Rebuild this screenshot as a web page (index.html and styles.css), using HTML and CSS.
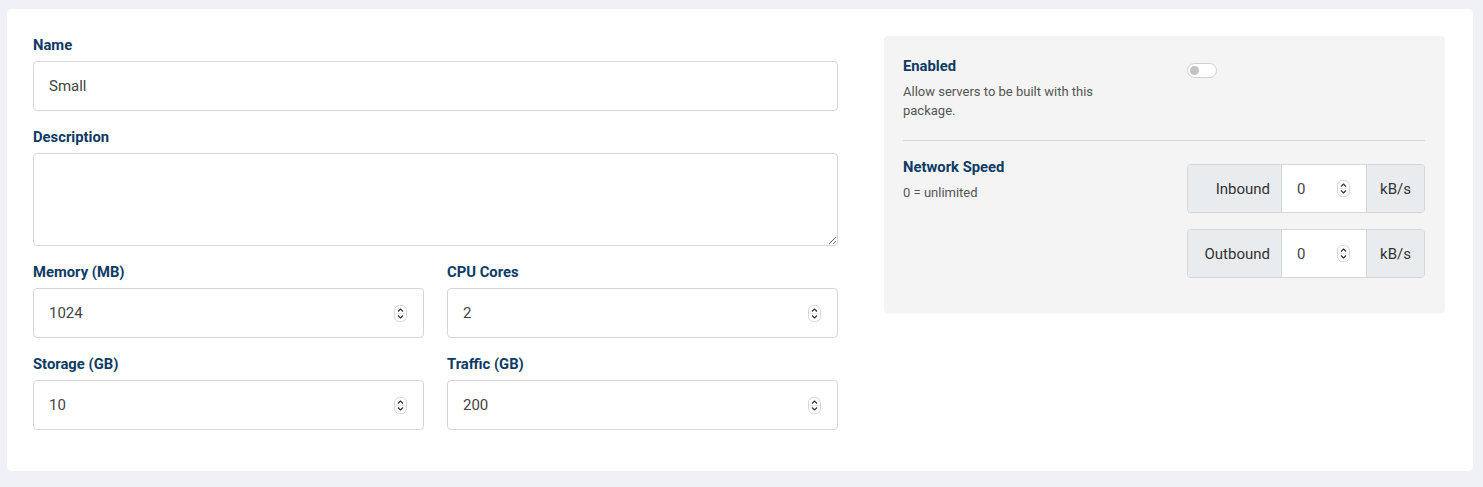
FILE: index.html
```html
<!DOCTYPE html>
<html lang="en">
<head>
    <meta charset="UTF-8">
    <meta name="viewport" content="width=device-width, initial-scale=1.0">
    <title>Package</title>
    <link rel="stylesheet" href="styles.css">
</head>
<body>

    <!-- Package form card -->
    <div class="card">
        <div class="form-grid">

            <!-- Left column: basic fields -->
            <div class="main-col">
                <div class="field">
                    <label class="label">Name</label>
                    <input class="input" type="text" value="Small">
                </div>
                <div class="field">
                    <label class="label">Description</label>
                    <textarea class="input textarea"></textarea>
                </div>
                <div class="pair">
                    <div class="field">
                        <label class="label">Memory (MB)</label>
                        <div class="input num"><span class="num-val">1024</span><svg class="spin" width="13" height="17" viewBox="0 0 13 17"><rect x="0.5" y="0.5" width="12" height="16" rx="5" fill="#fff" stroke="#d6d6d6"/><line x1="2" y1="8.5" x2="11" y2="8.5" stroke="#e8e8e8"/><path d="M4 6.5 L6.5 4 L9 6.5" fill="none" stroke="#333" stroke-width="1.2"/><path d="M4 10.5 L6.5 13 L9 10.5" fill="none" stroke="#333" stroke-width="1.2"/></svg></div>
                    </div>
                    <div class="field">
                        <label class="label">CPU Cores</label>
                        <div class="input num"><span class="num-val">2</span><svg class="spin" width="13" height="17" viewBox="0 0 13 17"><rect x="0.5" y="0.5" width="12" height="16" rx="5" fill="#fff" stroke="#d6d6d6"/><line x1="2" y1="8.5" x2="11" y2="8.5" stroke="#e8e8e8"/><path d="M4 6.5 L6.5 4 L9 6.5" fill="none" stroke="#333" stroke-width="1.2"/><path d="M4 10.5 L6.5 13 L9 10.5" fill="none" stroke="#333" stroke-width="1.2"/></svg></div>
                    </div>
                </div>
                <div class="pair">
                    <div class="field">
                        <label class="label">Storage (GB)</label>
                        <div class="input num"><span class="num-val">10</span><svg class="spin" width="13" height="17" viewBox="0 0 13 17"><rect x="0.5" y="0.5" width="12" height="16" rx="5" fill="#fff" stroke="#d6d6d6"/><line x1="2" y1="8.5" x2="11" y2="8.5" stroke="#e8e8e8"/><path d="M4 6.5 L6.5 4 L9 6.5" fill="none" stroke="#333" stroke-width="1.2"/><path d="M4 10.5 L6.5 13 L9 10.5" fill="none" stroke="#333" stroke-width="1.2"/></svg></div>
                    </div>
                    <div class="field">
                        <label class="label">Traffic (GB)</label>
                        <div class="input num"><span class="num-val">200</span><svg class="spin" width="13" height="17" viewBox="0 0 13 17"><rect x="0.5" y="0.5" width="12" height="16" rx="5" fill="#fff" stroke="#d6d6d6"/><line x1="2" y1="8.5" x2="11" y2="8.5" stroke="#e8e8e8"/><path d="M4 6.5 L6.5 4 L9 6.5" fill="none" stroke="#333" stroke-width="1.2"/><path d="M4 10.5 L6.5 13 L9 10.5" fill="none" stroke="#333" stroke-width="1.2"/></svg></div>
                    </div>
                </div>
            </div>

            <!-- Right column: settings panel -->
            <div class="panel">
                <div class="panel-row">
                    <div>
                        <div class="label">Enabled</div>
                        <p class="help">Allow servers to be built with this package.</p>
                    </div>
                    <div class="toggle-wrap">
                        <span class="toggle"><span class="knob"></span></span>
                    </div>
                </div>

                <hr class="divider">

                <div class="panel-row">
                    <div>
                        <div class="label">Network Speed</div>
                        <p class="help small">0 = unlimited</p>
                    </div>
                    <div class="groups">
                        <div class="group">
                            <span class="addon addon-name">Inbound</span>
                            <span class="group-input"><span>0</span><svg class="spin" width="13" height="17" viewBox="0 0 13 17"><rect x="0.5" y="0.5" width="12" height="16" rx="5" fill="#fff" stroke="#d6d6d6"/><line x1="2" y1="8.5" x2="11" y2="8.5" stroke="#e8e8e8"/><path d="M4 6.5 L6.5 4 L9 6.5" fill="none" stroke="#333" stroke-width="1.2"/><path d="M4 10.5 L6.5 13 L9 10.5" fill="none" stroke="#333" stroke-width="1.2"/></svg></span>
                            <span class="addon addon-unit">kB/s</span>
                        </div>
                        <div class="group">
                            <span class="addon addon-name">Outbound</span>
                            <span class="group-input"><span>0</span><svg class="spin" width="13" height="17" viewBox="0 0 13 17"><rect x="0.5" y="0.5" width="12" height="16" rx="5" fill="#fff" stroke="#d6d6d6"/><line x1="2" y1="8.5" x2="11" y2="8.5" stroke="#e8e8e8"/><path d="M4 6.5 L6.5 4 L9 6.5" fill="none" stroke="#333" stroke-width="1.2"/><path d="M4 10.5 L6.5 13 L9 10.5" fill="none" stroke="#333" stroke-width="1.2"/></svg></span>
                            <span class="addon addon-unit">kB/s</span>
                        </div>
                    </div>
                </div>
            </div>

        </div>
    </div>

</body>
</html>
```

FILE: styles.css
```css
body {
    margin: 0;
    padding: 9px 10px 16px 7px;
    background-color: #f0f1f6;
    font-family: Roboto, "Liberation Sans", sans-serif;
    color: #444;
}

/* White card */
.card {
    background: #fff;
    border-radius: 5px;
    padding: 26px 28px 25px 26px;
}

.form-grid {
    display: grid;
    grid-template-columns: 805px 561px;
    column-gap: 46px;
    align-items: start;
}

/* Labels and fields */
.label {
    display: block;
    font-size: 14.8px;
    font-weight: 700;
    line-height: 21px;
    color: #0e3a63;
}

.field {
    display: flex;
    flex-direction: column;
    gap: 5px;
    margin-bottom: 16px;
}

.pair {
    display: grid;
    grid-template-columns: 1fr 1fr;
    column-gap: 23px;
}

.input {
    box-sizing: border-box;
    height: 50px;
    width: 100%;
    border: 1px solid #d3d6da;
    border-radius: 4px;
    padding: 0 15px;
    font-family: inherit;
    font-size: 15px;
    color: #444;
    background: #fff;
    outline: none;
}

.textarea {
    height: 93px;
    resize: vertical;
    padding: 10px 15px;
}

.num {
    display: flex;
    align-items: center;
    justify-content: space-between;
    padding-right: 16px;
}

.spin {
    display: block;
}

/* Grey settings panel */
.panel {
    background: #f4f4f4;
    border-radius: 4px;
    padding: 20px 20px 35px 19px;
    margin-top: 1px;
}

.panel-row {
    display: grid;
    grid-template-columns: 1fr 238px;
}

.help {
    margin: 5px 0 0;
    max-width: 215px;
    font-size: 13px;
    line-height: 19px;
    color: #555;
}

.help.small {
    margin-top: 5px;
    font-size: 13px;
}

.toggle-wrap {
    padding-top: 7px;
}

.toggle {
    box-sizing: border-box;
    display: flex;
    align-items: center;
    width: 30px;
    height: 15px;
    border: 1px solid #cfcfcf;
    border-radius: 8px;
    background: #fff;
    padding-left: 2px;
}

.knob {
    width: 9px;
    height: 9px;
    border-radius: 50%;
    background: #c3c3c3;
}

.divider {
    border: none;
    border-top: 1px solid #d4d4d4;
    margin: 20px 0 16px;
}

/* Inbound / outbound input groups */
.groups {
    display: flex;
    flex-direction: column;
    gap: 16px;
    padding-top: 7px;
}

.group {
    display: flex;
    height: 49px;
    box-sizing: border-box;
    border: 1px solid #d3d6da;
    border-radius: 4px;
    overflow: hidden;
    font-size: 15px;
    color: #333;
}

.addon {
    display: flex;
    align-items: center;
    background: #e9ecef;
}

.addon-name {
    width: 94px;
    justify-content: flex-end;
    padding-right: 11px;
    box-sizing: border-box;
    border-right: 1px solid #d3d6da;
}

.addon-unit {
    flex: 1;
    justify-content: center;
    border-left: 1px solid #d3d6da;
}

.group-input {
    width: 84px;
    box-sizing: border-box;
    background: #fff;
    display: flex;
    align-items: center;
    justify-content: space-between;
    padding: 0 16px 0 15px;
    color: #444;
}
```
